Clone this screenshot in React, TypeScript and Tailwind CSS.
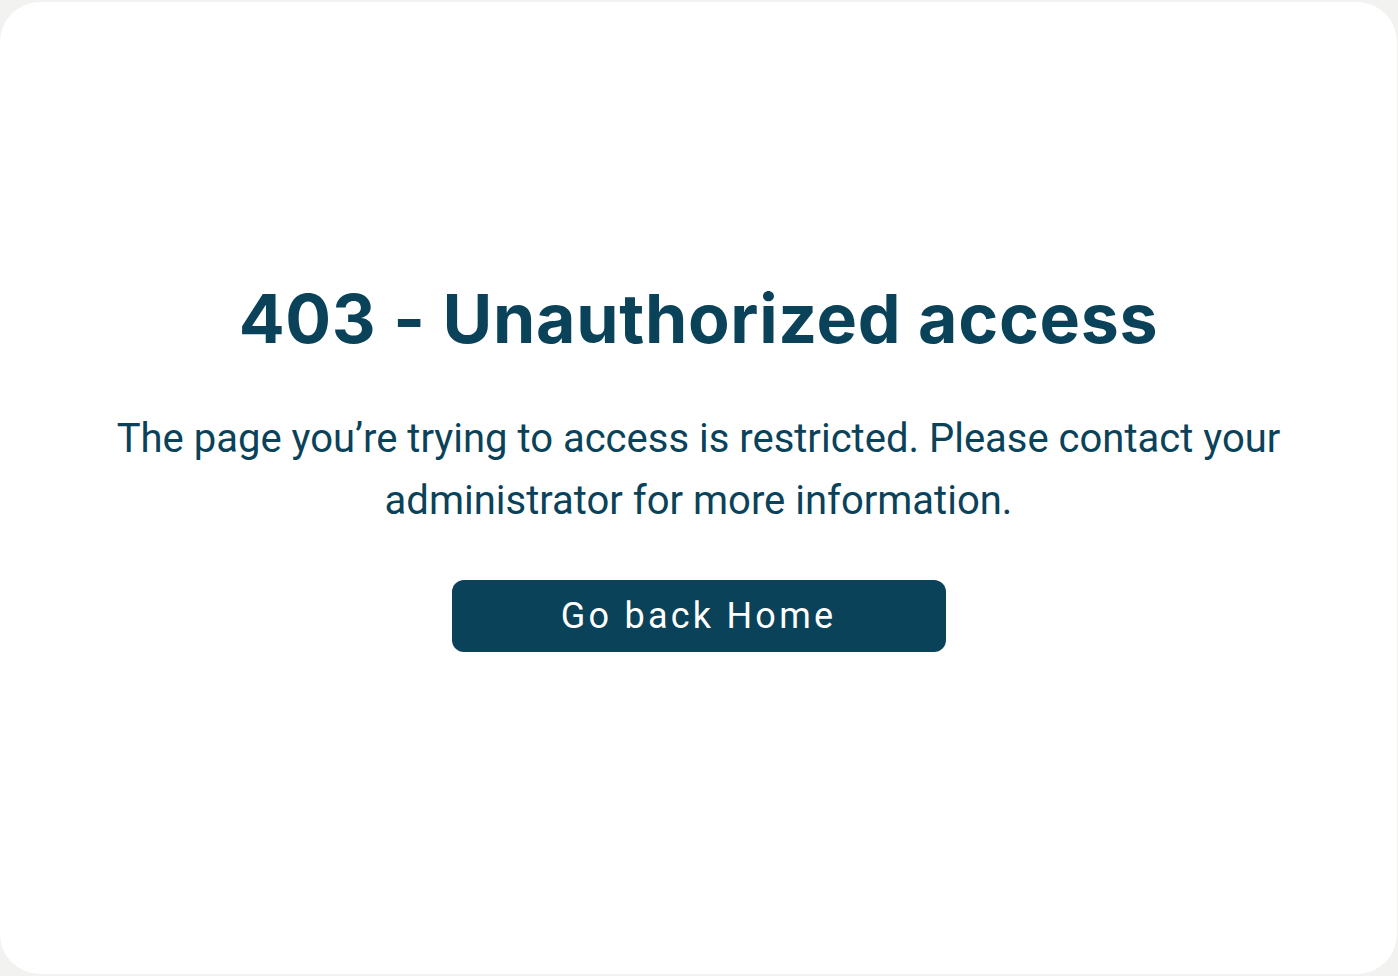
export default function App() {
  return (
    <div className="h-[976px] w-full bg-[#f2f2f0] pt-[2px] pb-[2px] pr-[1px]">
      <div className="flex h-full flex-col items-center justify-center rounded-[40px] bg-white pb-[46px]">
        <h1 className="font-['Inter',sans-serif] text-[68px] font-bold leading-[80px] tracking-[0.01em] text-[#0a4259]">
          403 - Unauthorized access
        </h1>
        <p className="mt-[50px] max-w-[1180px] text-center font-['Roboto',sans-serif] text-[40px] leading-[62px] text-[#0a4259]">
          The page you’re trying to access is restricted. Please contact your administrator for more information.
        </p>
        <button className="mt-[48px] h-[72px] w-[494px] rounded-[12px] bg-[#0a4259] font-['Roboto',sans-serif] text-[36px] tracking-[0.09em] text-white">
          Go back Home
        </button>
      </div>
    </div>
  );
}
